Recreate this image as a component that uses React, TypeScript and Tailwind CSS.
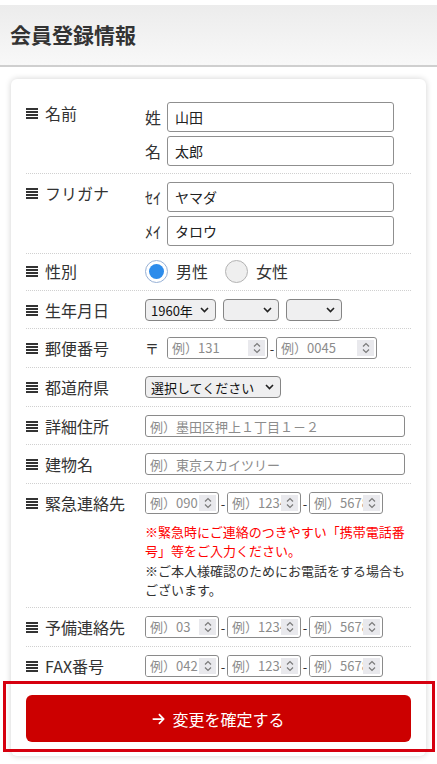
function ListIcon() {
  return (
    <svg width="12" height="11" viewBox="0 0 12 11" className="shrink-0 text-[#333]" fill="currentColor">
      <rect x="0" y="0" width="12" height="2" />
      <rect x="0" y="3" width="12" height="2" />
      <rect x="0" y="6" width="12" height="2" />
      <rect x="0" y="9" width="12" height="2" />
    </svg>
  );
}

function Row({
  label,
  pad = "pt-[8px] pb-[8px]",
  last,
  children,
}: {
  label: string;
  pad?: string;
  last?: boolean;
  children: React.ReactNode;
}) {
  return (
    <div className={"flex " + pad + (last ? "" : " border-b border-dotted border-[#d0d0d0]")}>
      <div className="w-[119px] shrink-0 flex items-center gap-[7px] h-[22px] text-[16px] leading-[22px] text-[#333]">
        <ListIcon />
        <span>{label}</span>
      </div>
      <div className="flex-1 min-w-0 flex flex-col items-stretch">{children}</div>
    </div>
  );
}

function NameInput({ sub, value }: { sub: string; value: string }) {
  return (
    <div className="flex items-center">
      <span className="w-[22px] text-[16px] leading-[22px] text-[#333]">{sub}</span>
      <input
        defaultValue={value}
        className="block w-[227px] h-[30px] border border-[#8f8f8f] rounded-[3px] px-[7px] text-[14px] text-[#222] bg-white outline-none"
      />
    </div>
  );
}

function FakeSelect({ text, className }: { text: string; className: string }) {
  return (
    <div
      className={
        "flex items-center justify-between h-[22px] border border-[#858585] rounded-[4px] bg-[#efeff0] pl-[5px] pr-[6px] text-[13px] leading-none text-[#111] " +
        className
      }
    >
      <span>{text}</span>
      <svg width="9" height="6" viewBox="0 0 9 6" fill="none" stroke="#222" strokeWidth="1.6">
        <path d="M1 1 L4.5 4.5 L8 1" />
      </svg>
    </div>
  );
}

function NumInput({ ph, className }: { ph: string; className: string }) {
  return (
    <div className={"flex h-[22px] border border-[#8a8a8a] rounded-[3px] overflow-hidden bg-white " + className}>
      <input
        placeholder={ph}
        className="block min-w-0 flex-1 pl-[4px] text-[13px] text-[#222] placeholder:text-[#8c8c8c] outline-none bg-white"
      />
      <div className="w-[17px] my-[2px] mr-[2px] bg-[#e9e9ed] flex items-center justify-center shrink-0">
        <svg width="8" height="12" viewBox="0 0 8 12" fill="none" stroke="#7a7a7a" strokeWidth="1.2">
          <path d="M1 4.5 L4 1.5 L7 4.5" />
          <path d="M1 7.5 L4 10.5 L7 7.5" />
        </svg>
      </div>
    </div>
  );
}

function Dash() {
  return <span className="w-[8px] text-center text-[13px] leading-none text-[#333]">-</span>;
}

function PhoneInputs({ a }: { a: string }) {
  return (
    <div className="flex items-center h-[22px]">
      <NumInput ph={a} className="w-[74px]" />
      <Dash />
      <NumInput ph="例）1234" className="w-[74px]" />
      <Dash />
      <NumInput ph="例）5678" className="w-[74px]" />
    </div>
  );
}

function TextInput({ ph }: { ph: string }) {
  return (
    <input
      placeholder={ph}
      className="block w-[260px] h-[22px] border border-[#8a8a8a] rounded-[3px] px-[4px] text-[13px] text-[#222] placeholder:text-[#8c8c8c] outline-none bg-white"
    />
  );
}

function ArrowIcon() {
  return (
    <svg width="13" height="14" viewBox="0 0 448 512" fill="currentColor">
      <path d="M438.6 278.6c12.5-12.5 12.5-32.8 0-45.3l-160-160c-12.5-12.5-32.8-12.5-45.3 0s-12.5 32.8 0 45.3L338.8 224 32 224c-17.7 0-32 14.3-32 32s14.3 32 32 32l306.7 0L233.4 393.4c-12.5 12.5-12.5 32.8 0 45.3s32.8 12.5 45.3 0l160-160z" />
    </svg>
  );
}

export default function App() {
  return (
    <div className="min-h-screen bg-white font-['Noto_Sans_CJK_JP','Noto_Sans',sans-serif] text-[#333]">
      <header className="mt-[5px] h-[62px] bg-gradient-to-b from-[#ececec] to-[#f8f8f8] border-b-2 border-[#cfcfcf] flex items-center px-[10px]">
        <h1 className="text-[21px] font-bold leading-none text-[#333] -mt-[2px]">会員登録情報</h1>
      </header>

      <div className="mx-[11px] mt-[12px] rounded-[6px] bg-white shadow-[0_0_6px_rgba(0,0,0,0.18)] px-[15px] pt-[15px] pb-[14px]">
        <Row label="名前" pad="pt-[8px] pb-[7px]">
          <div className="flex flex-col gap-[4px]">
            <NameInput sub="姓" value="山田" />
            <NameInput sub="名" value="太郎" />
          </div>
        </Row>

        <Row label="フリガナ" pad="pt-[8px] pb-[7px]">
          <div className="flex flex-col gap-[4px]">
            <NameInput sub="ｾｲ" value="ヤマダ" />
            <NameInput sub="ﾒｲ" value="タロウ" />
          </div>
        </Row>

        <Row label="性別" pad="pt-[6px] pb-[8px]">
          <div className="flex items-center h-[22px] text-[16px] leading-none text-[#333]">
            <span className="w-[23px] h-[23px] rounded-full border border-[#97b1d6] bg-white flex items-center justify-center">
              <span className="w-[15px] h-[15px] rounded-full bg-[#2d8ceb]" />
            </span>
            <span className="ml-[8px]">男性</span>
            <span className="ml-[17px] w-[23px] h-[23px] rounded-full border border-[#b3b3b3] bg-[#efefef]" />
            <span className="ml-[8px]">女性</span>
          </div>
        </Row>

        <Row label="生年月日" pad="pt-[8px] pb-[7px]">
          <div className="flex items-center gap-[7px]">
            <FakeSelect text="1960年" className="w-[71px]" />
            <FakeSelect text="" className="w-[56px]" />
            <FakeSelect text="" className="w-[56px]" />
          </div>
        </Row>

        <Row label="郵便番号">
          <div className="flex items-center h-[22px]">
            <span className="w-[22px] text-[14px] leading-none text-[#333]">〒</span>
            <NumInput ph="例）131" className="w-[101px]" />
            <Dash />
            <NumInput ph="例）0045" className="w-[101px]" />
          </div>
        </Row>

        <Row label="都道府県">
          <FakeSelect text="選択してください" className="w-[136px]" />
        </Row>

        <Row label="詳細住所" pad="pt-[8px] pb-[7px]">
          <TextInput ph="例）墨田区押上１丁目１－２" />
        </Row>

        <Row label="建物名">
          <TextInput ph="例）東京スカイツリー" />
        </Row>

        <Row label="緊急連絡先">
          <PhoneInputs a="例）090" />
          <p className="mt-[8px] text-[13px] leading-[19px] text-[#ff0000]">
            ※緊急時にご連絡のつきやすい「携帯電話番号」等をご入力ください。
          </p>
          <p className="mt-[1px] text-[13px] leading-[19px] text-[#333]">
            ※ご本人様確認のためにお電話をする場合もございます。
          </p>
        </Row>

        <Row label="予備連絡先">
          <PhoneInputs a="例）03" />
        </Row>

        <Row label="FAX番号" last>
          <PhoneInputs a="例）042" />
        </Row>

        <div className="relative mt-[10px]">
          <button className="w-full h-[47px] rounded-[6px] bg-[#cc0000] text-white text-[16px] flex items-center justify-center gap-[7px]">
            <ArrowIcon />
            <span>変更を確定する</span>
          </button>
          <div className="pointer-events-none absolute -left-[23px] -right-[24px] -top-[14px] -bottom-[10px] border-[3px] border-[#d6000f]" />
        </div>
      </div>
    </div>
  );
}
